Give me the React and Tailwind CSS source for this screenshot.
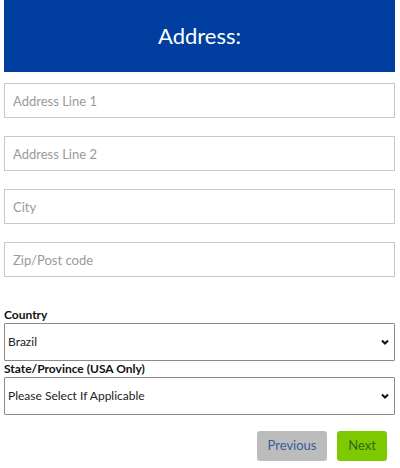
import React from 'react';

const font = { fontFamily: 'Lato, "Open Sans", sans-serif' };

function TextField({ placeholder }) {
  return (
    <input
      type="text"
      placeholder={placeholder}
      className="block w-full h-[35px] border border-[#c8c8c8] bg-white px-[8px] text-[13px] text-[#333] placeholder-[#9a9a9a] outline-none"
      style={font}
    />
  );
}

function SelectField({ label, value, options }) {
  return (
    <div>
      <label className="block text-[12px] font-bold text-[#111] leading-[14px] mb-[1px]">{label}</label>
      <div className="relative">
        <select
          defaultValue={value}
          className="block w-full h-[38px] appearance-none border border-[#8a8a8a] rounded-[1px] bg-white pl-[3px] pr-[24px] text-[12px] text-[#222] outline-none"
          style={font}
        >
          {options.map((o) => (
            <option key={o}>{o}</option>
          ))}
        </select>
        <svg
          className="absolute right-[6px] top-1/2 -translate-y-1/2 pointer-events-none"
          width="8"
          height="6"
          viewBox="0 0 8 6"
        >
          <path d="M1 1.5l3 3 3-3" fill="none" stroke="#111" strokeWidth="2" />
        </svg>
      </div>
    </div>
  );
}

export default function App() {
  return (
    <div className="w-[400px] h-[468px] bg-white pl-[4px] pr-[5px]" style={font}>
      <div className="h-[72px] bg-[#003f9f] flex items-center justify-center">
        <h1 className="text-[22px] text-white leading-none">Address:</h1>
      </div>

      <div className="pt-[11px] flex flex-col gap-[18px]">
        <TextField placeholder="Address Line 1" />
        <TextField placeholder="Address Line 2" />
        <TextField placeholder="City" />
        <TextField placeholder="Zip/Post code" />
      </div>

      <div className="pt-[31px] flex flex-col gap-[1px]">
        <SelectField label="Country" value="Brazil" options={['Brazil', 'United States', 'Canada']} />
        <SelectField
          label="State/Province (USA Only)"
          value="Please Select If Applicable"
          options={['Please Select If Applicable', 'Alabama', 'Alaska']}
        />
      </div>

      <div className="pt-[16px] flex justify-end gap-[10px] pr-[8px]">
        <button className="w-[70px] h-[30px] rounded-[3px] bg-[#bcbcbc] text-[13px] text-[#3a5b9a]">
          Previous
        </button>
        <button className="w-[50px] h-[30px] rounded-[3px] bg-[#7fc900] text-[13px] text-[#2e6a1c]">
          Next
        </button>
      </div>
    </div>
  );
}
